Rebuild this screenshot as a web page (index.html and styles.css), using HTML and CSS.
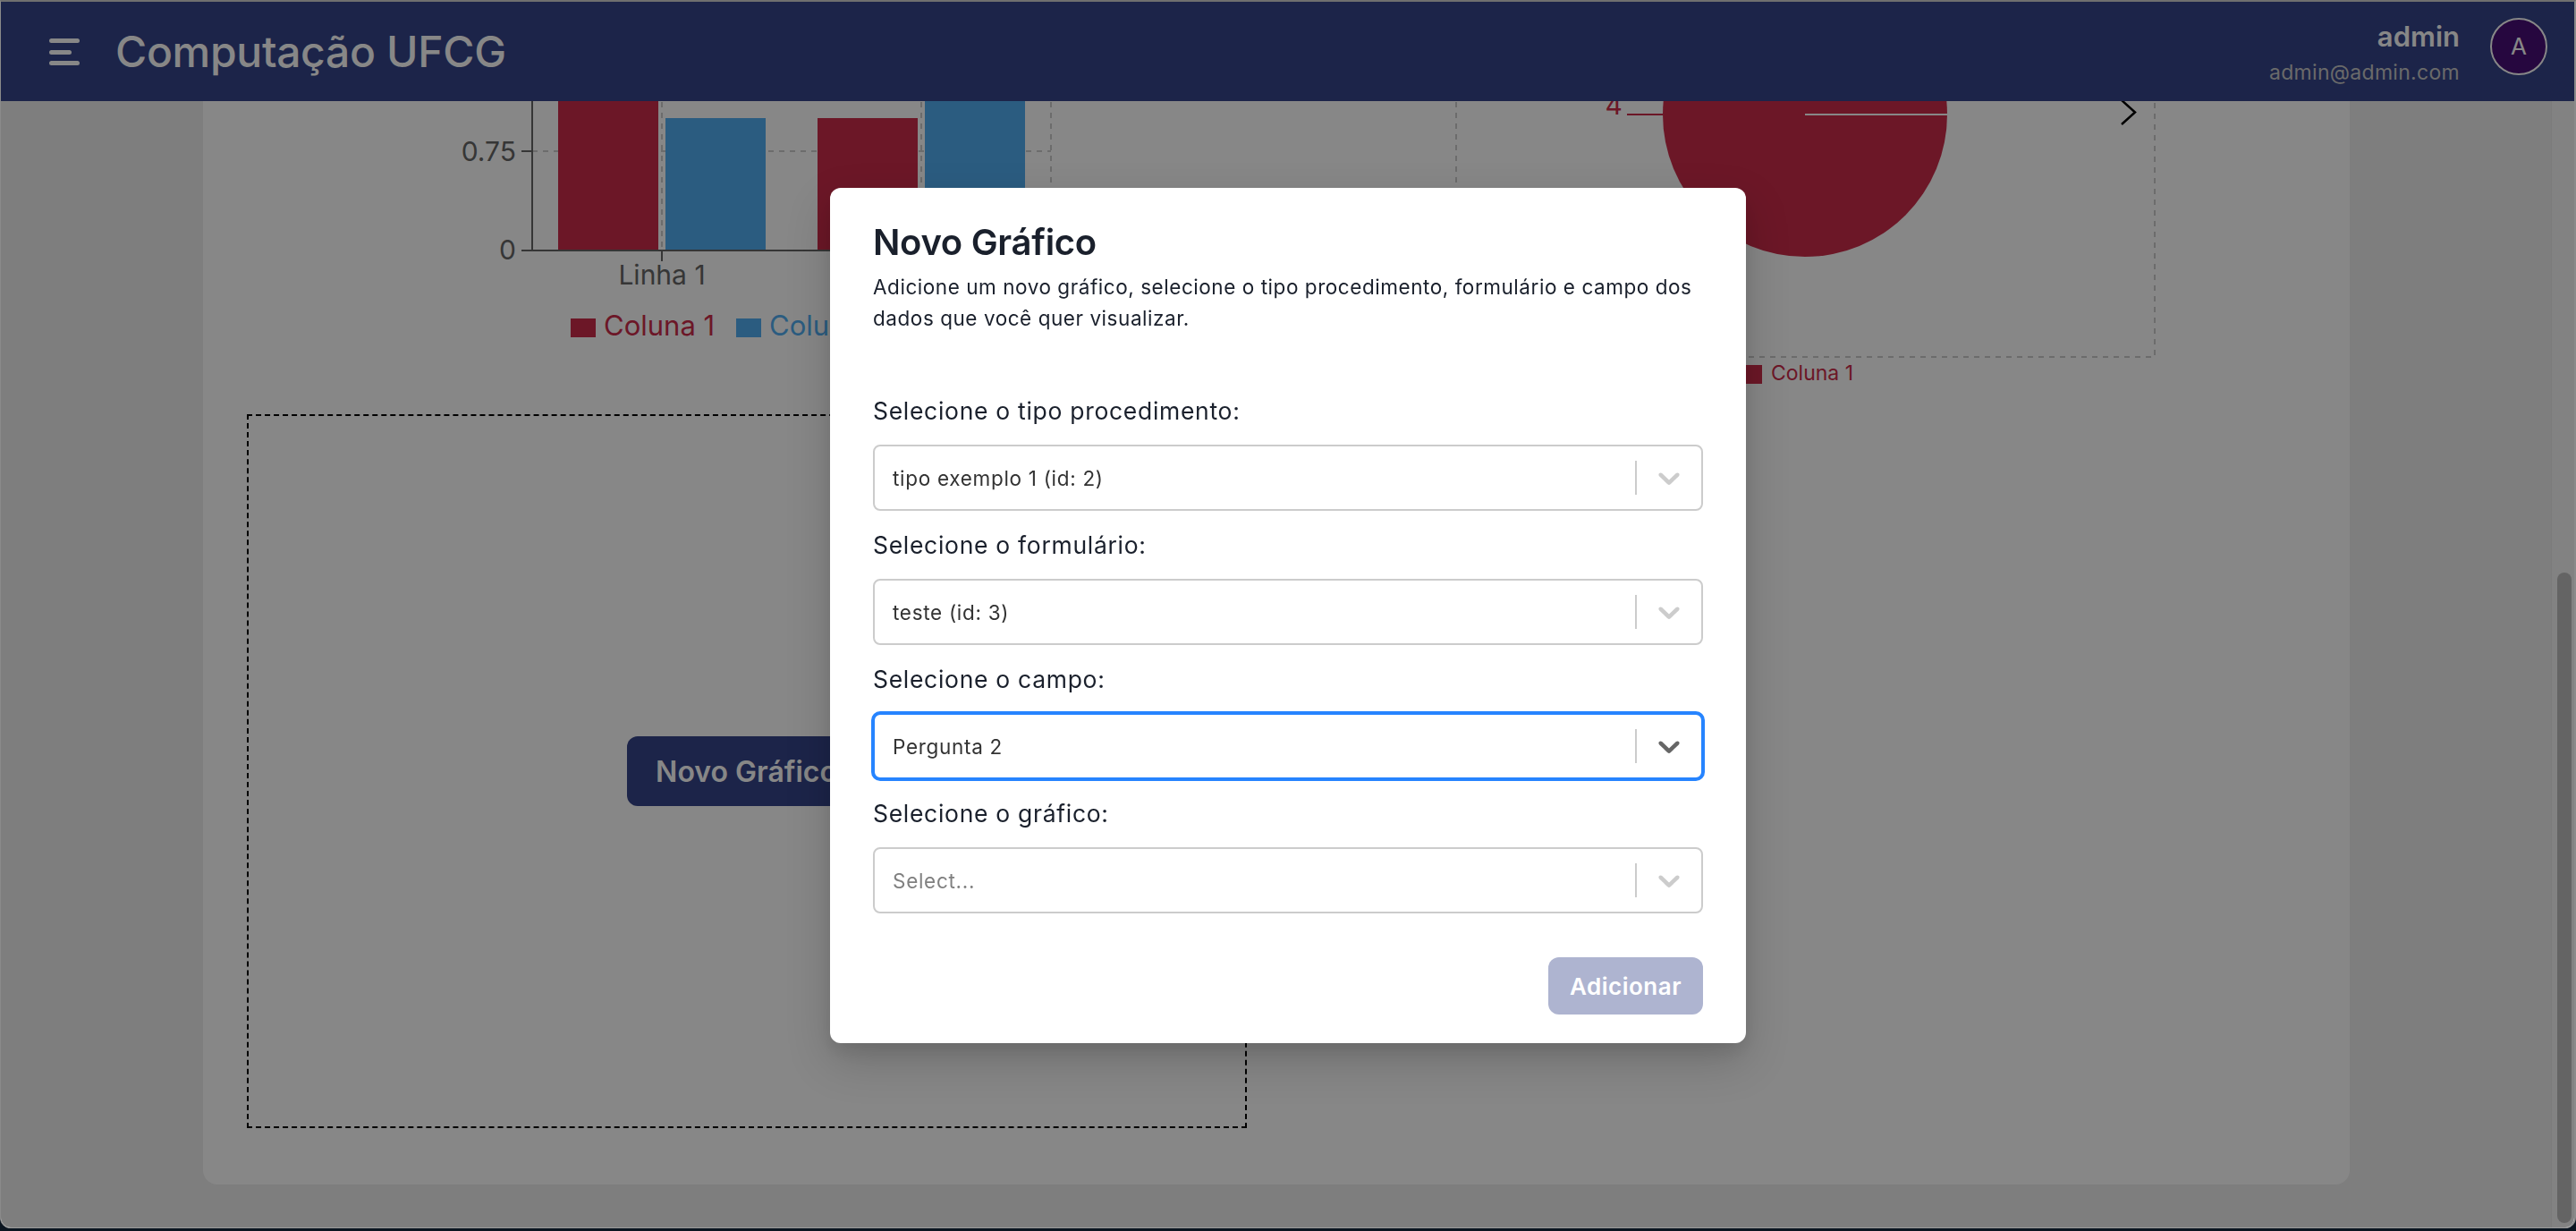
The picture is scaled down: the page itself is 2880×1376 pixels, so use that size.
FILE: index.html
```html
<!DOCTYPE html>
<html lang="pt-BR">
<head>
<meta charset="utf-8">
<title>Computação UFCG</title>
<link rel="stylesheet" href="styles.css">
</head>
<body>
<div class="window">
  <header class="topbar">
    <div class="brand">
      <svg class="menu-icon" viewBox="0 0 34 32" width="34" height="32" aria-hidden="true">
        <rect x="0" y="1" width="34" height="5" rx="2.5"/>
        <rect x="0" y="14" width="25" height="5" rx="2.5"/>
        <rect x="0" y="26" width="34" height="5" rx="2.5"/>
      </svg>
      <span class="brand-title">Computação UFCG</span>
    </div>
    <div class="user">
      <div class="user-info">
        <div class="user-name">admin</div>
        <div class="user-email">admin@admin.com</div>
      </div>
      <div class="avatar">A</div>
    </div>
  </header>

  <div class="workspace">
    <main class="main">
      <div class="scroll-content">
        <section class="card">
          <div class="col">
            <svg class="chart" viewBox="0 0 1118 460" width="1118" height="460">
              <g class="grid">
                <line x1="319" y1="199" x2="899" y2="199"/>
                <line x1="464" y1="0" x2="464" y2="310"/>
                <line x1="754" y1="0" x2="754" y2="310"/>
                <line x1="899" y1="0" x2="899" y2="310"/>
              </g>
              <rect class="fill-red" x="348" y="0" width="112" height="310"/>
              <rect class="fill-blue" x="468" y="162" width="112" height="148"/>
              <rect class="fill-red" x="638" y="162" width="112" height="148"/>
              <rect class="fill-blue" x="758" y="0" width="112" height="310"/>
              <g class="axis">
                <line x1="319" y1="0" x2="319" y2="311"/>
                <line x1="318" y1="310" x2="899" y2="310"/>
                <line x1="307" y1="199" x2="319" y2="199"/>
                <line x1="307" y1="310" x2="319" y2="310"/>
                <line x1="464" y1="310" x2="464" y2="322"/>
                <line x1="754" y1="310" x2="754" y2="322"/>
              </g>
              <text class="tick" x="301" y="210" text-anchor="end">0.75</text>
              <text class="tick" x="301" y="320" text-anchor="end">0</text>
              <text class="tick" x="464" y="348" text-anchor="middle">Linha 1</text>
              <text class="tick" x="754" y="348" text-anchor="middle">Linha 2</text>
              <rect class="fill-red" x="362" y="386" width="28" height="21"/>
              <text class="legend fill-red" x="399" y="405">Coluna 1</text>
              <rect class="fill-blue" x="547" y="386" width="28" height="21"/>
              <text class="legend fill-blue" x="584" y="405">Coluna 2</text>
            </svg>
            <div class="placeholder">
              <button class="btn btn-new" type="button">Novo Gráfico</button>
            </div>
          </div>
          <div class="col">
            <svg class="chart" viewBox="0 0 1118 460" width="1118" height="460">
              <path class="frame" d="M168 0 V429 H949 V0"/>
              <circle class="fill-red" cx="558" cy="158" r="159"/>
              <line class="slice-edge" x1="558" y1="158" x2="717" y2="158"/>
              <line class="label-line" x1="399" y1="158" x2="359" y2="158"/>
              <text class="tick-red" x="354" y="158" text-anchor="end">4</text>
              <polyline class="arrow" points="912,142 927,155.5 912,169"/>
              <rect class="fill-red" x="482" y="438" width="28" height="21"/>
              <text class="legend-sm fill-red" x="520" y="455">Coluna 1</text>
            </svg>
          </div>
        </section>
      </div>
    </main>
    <div class="scrollbar"><div class="scrollbar-thumb"></div></div>
  </div>

  <div class="overlay"></div>

  <div class="modal-layer">
    <div class="modal" role="dialog" aria-labelledby="modal-title">
      <header class="modal-header">
        <h2 class="modal-title" id="modal-title">Novo Gráfico</h2>
        <p class="modal-desc">Adicione um novo gráfico, selecione o tipo procedimento, formulário e campo dos dados que você quer visualizar.</p>
      </header>
      <div class="modal-body">
        <div class="field">
          <label class="field-label">Selecione o tipo procedimento:</label>
          <div class="select">
            <span class="select-value">tipo exemplo 1 (id: 2)</span>
            <span class="select-sep"></span>
            <span class="select-indicator"><svg viewBox="0 0 20 20"><path d="M4.516 7.548c0.436-0.446 1.043-0.481 1.576 0l3.908 3.747 3.908-3.747c0.533-0.481 1.141-0.446 1.574 0 0.436 0.445 0.408 1.197 0 1.615-0.406 0.418-4.695 4.502-4.695 4.502-0.217 0.223-0.502 0.335-0.787 0.335s-0.57-0.112-0.789-0.335c0 0-4.287-4.084-4.695-4.502s-0.436-1.170 0-1.615z"/></svg></span>
          </div>
        </div>
        <div class="field">
          <label class="field-label">Selecione o formulário:</label>
          <div class="select">
            <span class="select-value">teste (id: 3)</span>
            <span class="select-sep"></span>
            <span class="select-indicator"><svg viewBox="0 0 20 20"><path d="M4.516 7.548c0.436-0.446 1.043-0.481 1.576 0l3.908 3.747 3.908-3.747c0.533-0.481 1.141-0.446 1.574 0 0.436 0.445 0.408 1.197 0 1.615-0.406 0.418-4.695 4.502-4.695 4.502-0.217 0.223-0.502 0.335-0.787 0.335s-0.57-0.112-0.789-0.335c0 0-4.287-4.084-4.695-4.502s-0.436-1.170 0-1.615z"/></svg></span>
          </div>
        </div>
        <div class="field">
          <label class="field-label">Selecione o campo:</label>
          <div class="select is-focused">
            <span class="select-value">Pergunta 2</span>
            <span class="select-sep"></span>
            <span class="select-indicator"><svg viewBox="0 0 20 20"><path d="M4.516 7.548c0.436-0.446 1.043-0.481 1.576 0l3.908 3.747 3.908-3.747c0.533-0.481 1.141-0.446 1.574 0 0.436 0.445 0.408 1.197 0 1.615-0.406 0.418-4.695 4.502-4.695 4.502-0.217 0.223-0.502 0.335-0.787 0.335s-0.57-0.112-0.789-0.335c0 0-4.287-4.084-4.695-4.502s-0.436-1.170 0-1.615z"/></svg></span>
          </div>
        </div>
        <div class="field">
          <label class="field-label">Selecione o gráfico:</label>
          <div class="select">
            <span class="select-value is-placeholder">Select...</span>
            <span class="select-sep"></span>
            <span class="select-indicator"><svg viewBox="0 0 20 20"><path d="M4.516 7.548c0.436-0.446 1.043-0.481 1.576 0l3.908 3.747 3.908-3.747c0.533-0.481 1.141-0.446 1.574 0 0.436 0.445 0.408 1.197 0 1.615-0.406 0.418-4.695 4.502-4.695 4.502-0.217 0.223-0.502 0.335-0.787 0.335s-0.57-0.112-0.789-0.335c0 0-4.287-4.084-4.695-4.502s-0.436-1.170 0-1.615z"/></svg></span>
          </div>
        </div>
      </div>
      <footer class="modal-footer">
        <button class="btn btn-submit" type="button" disabled>Adicionar</button>
      </footer>
    </div>
  </div>
</div>
</body>
</html>
```

FILE: styles.css
```css
* { box-sizing: border-box; }

html, body {
  margin: 0;
  padding: 0;
}

body {
  width: 2880px;
  height: 1376px;
  overflow: hidden;
  background: #0b1520;
  font-family: Inter, "Noto Sans", "Liberation Sans", sans-serif;
  color: #1a202c;
}

.window {
  position: relative;
  height: 1373px;
  display: flex;
  flex-direction: column;
  border-top: 2px solid #6f6f6f;
  border-left: 1px solid #8a8a8a;
  border-right: 2px solid #8a8a8a;
  border-bottom: 1px solid #9b9b9b;
  border-radius: 0 0 12px 12px;
  overflow: hidden;
  background: #eeeeee;
}

/* ---------- top bar ---------- */
.topbar {
  flex: none;
  height: 111px;
  background: #35448a;
  color: #fff;
  display: flex;
  align-items: center;
  justify-content: space-between;
  padding: 0 30px 0 54px;
}

.brand {
  display: flex;
  align-items: center;
  gap: 40px;
}

.menu-icon {
  display: block;
  fill: #fff;
}

.brand-title {
  font-size: 48px;
  font-weight: 500;
  line-height: 58px;
  letter-spacing: -0.3px;
}

.user {
  display: flex;
  align-items: flex-start;
  gap: 34px;
}

.user-info {
  text-align: right;
  margin-top: 2px;
}

.user-name {
  font-size: 31px;
  font-weight: 600;
  line-height: 38px;
}

.user-email {
  margin-top: 6px;
  font-size: 23px;
  line-height: 30px;
  letter-spacing: 0.3px;
  color: #c8c8c8;
}

.avatar {
  width: 64px;
  height: 64px;
  border-radius: 50%;
  border: 2px solid #fff;
  background: #480f77;
  color: #fff;
  font-size: 26px;
  display: flex;
  align-items: center;
  justify-content: center;
}

/* ---------- page ---------- */
.workspace {
  flex: 1;
  min-height: 0;
  display: flex;
}

.main {
  flex: 1;
  overflow: hidden;
  background: #eeeeee;
}

/* page is scrolled down: content starts above the visible area */
.scroll-content {
  margin-top: -192px;
  display: flex;
  justify-content: center;
}

.card {
  width: 2400px;
  background: #fff;
  border-radius: 16px;
  padding: 49px 49px 63px;
  display: grid;
  grid-template-columns: 1118px 1118px;
  column-gap: 66px;
  align-items: start;
}

.col {
  display: flex;
  flex-direction: column;
}

.chart {
  display: block;
  overflow: hidden;
  font-family: Inter, "Noto Sans", sans-serif;
}

.grid line,
.frame {
  stroke: #cccccc;
  stroke-width: 2;
  stroke-dasharray: 6 6;
  fill: none;
}

.axis line {
  stroke: #666666;
  stroke-width: 2;
}

.fill-red { fill: #cc2d4b; }
.fill-blue { fill: #51aef2; }

.tick {
  font-size: 30px;
  fill: #666666;
}

.tick-red {
  font-size: 30px;
  fill: #cc2d4b;
}

.legend { font-size: 31px; }
.legend-sm { font-size: 23px; }

.slice-edge {
  stroke: #ffffff;
  stroke-width: 2;
}

.label-line {
  stroke: #cc2d4b;
  stroke-width: 2;
}

.arrow {
  fill: none;
  stroke: #000;
  stroke-width: 2.5;
}

.placeholder {
  margin-top: 33px;
  height: 798px;
  border: 2px dashed #000;
  display: flex;
  align-items: center;
  justify-content: center;
}

.btn {
  border: 0;
  font-family: inherit;
  font-weight: 600;
  color: #fff;
  background: #35448a;
  border-radius: 12px;
  cursor: pointer;
}

.btn-new {
  height: 78px;
  padding: 0 32px;
  font-size: 32px;
}

.btn-submit {
  height: 64px;
  padding: 0 24px;
  font-size: 26px;
  letter-spacing: 0.5px;
  opacity: 0.4;
  cursor: not-allowed;
}

/* ---------- fake scrollbar ---------- */
.scrollbar {
  flex: none;
  width: 26px;
  background: #f5f5f5;
  border-left: 1px solid #e8e8e8;
  padding: 527px 0 0 6px;
}

.scrollbar-thumb {
  width: 16px;
  height: 727px;
  border-radius: 8px;
  background: #bdbdbd;
}

/* ---------- modal ---------- */
.overlay {
  position: absolute;
  inset: 0;
  background: rgba(0, 0, 0, 0.47);
}

.modal-layer {
  position: fixed;
  inset: 0;
  display: flex;
  align-items: center;
  justify-content: center;
}

.modal {
  width: 1024px;
  background: #fff;
  border-radius: 12px;
  box-shadow: 0 20px 50px rgba(0, 0, 0, 0.18), 0 10px 20px rgba(0, 0, 0, 0.08);
  color: #1a202c;
}

.modal-header {
  padding: 35px 48px 0;
}

.modal-title {
  margin: 0;
  font-size: 40px;
  line-height: 52px;
  font-weight: 600;
  letter-spacing: -0.3px;
}

.modal-desc {
  margin: 6px 0 0;
  font-size: 22.5px;
  line-height: 35px;
  letter-spacing: 0.55px;
}

.modal-body {
  padding: 68px 48px 0;
  display: flex;
  flex-direction: column;
  gap: 20px;
}

.field-label {
  display: block;
  font-size: 26.5px;
  line-height: 36px;
  letter-spacing: 0.7px;
  margin-bottom: 20px;
}

.select {
  height: 74px;
  border: 2px solid #cccccc;
  border-radius: 8px;
  background: #fff;
  display: flex;
  align-items: center;
  padding-left: 20px;
}

.select-value {
  flex: 1;
  font-size: 22.5px;
  letter-spacing: 0.7px;
  color: #333333;
}

.select-value.is-placeholder {
  color: #808080;
}

.select-sep {
  align-self: stretch;
  width: 2px;
  margin: 16px 0;
  background: #cccccc;
}

.select-indicator {
  display: flex;
  padding: 0 16px;
  color: #cccccc;
}

.select-indicator svg {
  display: block;
  width: 40px;
  height: 40px;
  fill: currentColor;
}

.select.is-focused {
  border-color: #2684ff;
  box-shadow: 0 0 0 2px #2684ff;
}

.select.is-focused .select-indicator {
  color: #666666;
}

.modal-footer {
  padding: 49px 48px 32px;
  display: flex;
  justify-content: flex-end;
}
```
